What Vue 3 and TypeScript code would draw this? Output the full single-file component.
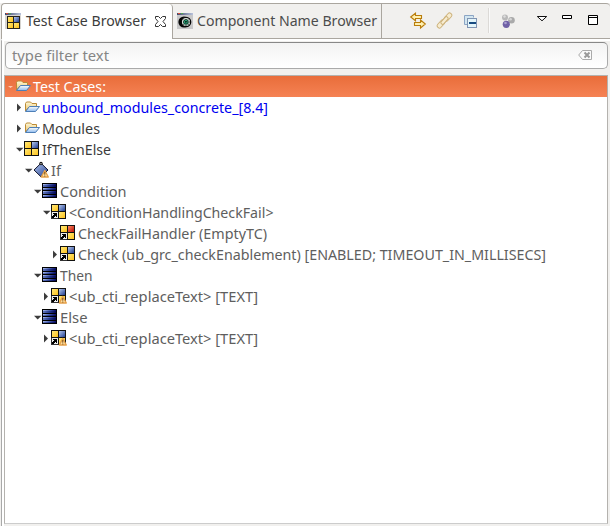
<script setup lang="ts">
interface Row {
  depth: number
  icon: 'folder' | 'test' | 'if' | 'list' | 'ref' | 'fail' | 'warn'
  label: string
  width: number
  state?: 'open' | 'closed'
  tone?: 'selected' | 'link' | 'dark'
}

const rows: Row[] = [
  { depth: 0, icon: 'folder', label: 'Test Cases:', width: 73, state: 'open', tone: 'selected' },
  { depth: 1, icon: 'folder', label: 'unbound_modules_concrete_[8.4]', width: 226, state: 'closed', tone: 'link' },
  { depth: 1, icon: 'folder', label: 'Modules', width: 58, state: 'closed', tone: 'dark' },
  { depth: 1, icon: 'test', label: 'IfThenElse', width: 69, state: 'open', tone: 'dark' },
  { depth: 2, icon: 'if', label: 'If', width: 10, state: 'open' },
  { depth: 3, icon: 'list', label: 'Condition', width: 66.5, state: 'open' },
  { depth: 4, icon: 'ref', label: '<ConditionHandlingCheckFail>', width: 204.5, state: 'open' },
  { depth: 5, icon: 'fail', label: 'CheckFailHandler (EmptyTC)', width: 189 },
  { depth: 5, icon: 'ref', label: 'Check (ub_grc_checkEnablement) [ENABLED; TIMEOUT_IN_MILLISECS]', width: 468, state: 'closed' },
  { depth: 3, icon: 'list', label: 'Then', width: 32.5, state: 'open' },
  { depth: 4, icon: 'warn', label: '<ub_cti_replaceText> [TEXT]', width: 189, state: 'closed' },
  { depth: 3, icon: 'list', label: 'Else', width: 27.5, state: 'open' },
  { depth: 4, icon: 'warn', label: '<ub_cti_replaceText> [TEXT]', width: 189, state: 'closed' },
]
</script>

<template>
  <svg class="defs" width="0" height="0" aria-hidden="true">
    <defs>
      <linearGradient id="yellow" x1="0" y1="0" x2="1" y2="1"><stop stop-color="#ffe878" /><stop offset="1" stop-color="#ffc21c" /></linearGradient>
      <linearGradient id="blue" x1="0" y1="0" x2="1" y2="1"><stop stop-color="#b4c8ee" /><stop offset="1" stop-color="#233f91" /></linearGradient>
      <linearGradient id="red" x1="0" y1="0" x2="1" y2="1"><stop stop-color="#ff8a60" /><stop offset="1" stop-color="#b80d08" /></linearGradient>
      <linearGradient id="bar" x1="0" x2="1"><stop stop-color="#a9bbea" /><stop offset=".5" stop-color="#4a60b0" /><stop offset="1" stop-color="#060a66" /></linearGradient>
      <linearGradient id="bardark" x1="0" x2="1"><stop stop-color="#6176bd" /><stop offset=".5" stop-color="#24388c" /><stop offset="1" stop-color="#02044f" /></linearGradient>
      <linearGradient id="flap" x1="0" y1="0" x2="0" y2="1"><stop stop-color="#fffefa" /><stop offset="1" stop-color="#8dbaf0" /></linearGradient>
      <linearGradient id="back" x1="0" y1="0" x2="0" y2="1"><stop stop-color="#fffbdc" /><stop offset="1" stop-color="#e8bd63" /></linearGradient>
      <linearGradient id="titlebar" x1="0" x2="1"><stop stop-color="#3f4a6c" /><stop offset="1" stop-color="#b9c3dc" /></linearGradient>
    </defs>
  </svg>
  <div class="view">
    <header class="tabs">
      <div class="tab active">
        <svg class="icon" width="16" height="16" shape-rendering="crispEdges">
          <rect width="16" height="16" fill="#d6d4d0" /><rect width="16" height="2" fill="url(#titlebar)" />
          <rect x="1" width="2" height="1" fill="#e14d35" /><rect x="4" width="2" height="1" fill="#4fa74e" />
          <rect x="2" y="3" width="13" height="13" fill="#26231c" />
          <rect x="3" y="4" width="5" height="5" fill="url(#yellow)" /><rect x="9" y="4" width="5" height="5" fill="url(#blue)" />
          <rect x="3" y="10" width="5" height="5" fill="url(#yellow)" /><rect x="9" y="10" width="5" height="5" fill="url(#yellow)" />
        </svg>
        <svg class="tabtext" width="121" height="24"><text x="0" y="17" textLength="120" lengthAdjust="spacingAndGlyphs">Test Case Browser</text></svg>
        <svg class="close" width="11" height="11"><path d="M.5.5h3l2 2 2-2h3v2l-2.500 3 2.500 3v2h-3l-2-2-2 2h-3v-2l2.500-3-2.500-3z" fill="#fff" stroke="#333" /></svg>
      </div>
      <div class="tab inactive">
        <svg class="icon" width="16" height="16">
          <rect width="16" height="16" fill="#c8c8c9" /><rect width="16" height="2" fill="url(#titlebar)" />
          <rect x="1" width="2" height="1" fill="#e14d35" /><rect x="4" width="2" height="1" fill="#4fa74e" />
          <circle cx="7" cy="9" r="5.600" fill="#050505" /><circle cx="9" cy="9" r="4.700" fill="#d9e5df" stroke="#050505" stroke-width="1.300" />
          <circle cx="9" cy="9" r="2.600" fill="#20a778" stroke="#222" stroke-width=".5" /><path d="M9 4v10M4 9h10M5.500 5.500l7 7M12.500 5.500l-7 7" stroke="#111" stroke-width=".8" stroke-dasharray="1 1" />
        </svg>
        <svg class="tabtext" width="182" height="24"><text x="0" y="17" textLength="180" lengthAdjust="spacingAndGlyphs">Component Name Browser</text></svg>
      </div>
      <div class="tools">
        <svg width="190" height="26" viewBox="410 8 190 26">
          <g fill="#fff0b0" stroke="#b97d0c" stroke-width="1.100">
            <path d="M410.700 17l4.800-3.800v2.300h6v3h-6v2.300z" /><path d="M425.300 24l-4.800-4v2.500h-6v3h6V28z" />
          </g>
          <g fill="#f7ecd0" stroke="#ccb17a">
            <rect x="-4.500" y="-2.200" width="9" height="4.400" rx="1.800" transform="translate(441 24)rotate(-48)" />
            <rect x="-4.500" y="-2.200" width="9" height="4.400" rx="1.800" transform="translate(448 17)rotate(-48)" /><rect x="-4.500" y="-1.700" width="9" height="3.400" rx="1.500" transform="translate(444.500 20.500)rotate(-48)" />
          </g>
          <path d="M464.500 24.500v-9h9v2" fill="none" stroke="#8ba5c4" /><path d="M465 16h8v2h-6v6h-2z" fill="#d3e6f0" />
          <path d="M464.500 24.500h2.500" stroke="#8ba5c4" /><rect x="467.500" y="18.500" width="9" height="9" fill="#e3f5fa" stroke="#8094b2" /><path d="M469 22h7v2h-7z" fill="#174b80" />
          <path d="M488.500 8v25" stroke="#dcdad7" /><path d="M489.500 8v25" stroke="#fafafa" />
          <circle cx="505" cy="17.500" r="3" fill="#b9b9b9" /><circle cx="511.500" cy="20.300" r="3.300" fill="#aaa" /><circle cx="506.300" cy="24.300" r="3.600" fill="#7061a6" />
          <circle cx="504.500" cy="16.500" r="1.200" fill="#dedede" /><circle cx="510.600" cy="19.200" r="1.300" fill="#d6d6d6" /><circle cx="505.500" cy="23" r="1.300" fill="#aaa0d2" />
          <path d="M537.300 16.500h9.400l-4.700 4.300z" fill="#fff" stroke="#111" />
          <path d="M562.500 15.500h9v3h-9z" fill="#fff" stroke="#000" />
          <path d="M588.500 15.500h9v9h-9z" fill="#fff" stroke="#000" /><path d="M588 17.500h10" stroke="#000" />
        </svg>
      </div>
    </header>
    <main class="body">
      <div class="filter">
        <svg width="100" height="24"><text x="0" y="17" textLength="97" lengthAdjust="spacingAndGlyphs">type filter text</text></svg>
        <svg width="15" height="11"><path d="M4.500.5h9v9h-9L.7 5z" fill="#fafafa" stroke="#aaa" /><path d="M6.500 2.500l5 5m0-5l-5 5" stroke="#999" stroke-width="2" /></svg>
      </div>
      <div class="tree">
        <div v-for="(row, i) in rows" :key="i" class="row" :class="[row.tone, 'd' + row.depth]">
          <svg class="arrow" width="9" height="17">
            <path v-if="row.tone === 'selected'" d="M2 8h5L4.500 10z" fill="#ffc7ac" />
            <path v-else-if="row.state === 'open'" d="M1 6.800h7.500L4.700 10.500z" fill="#3c3c3c" />
            <path v-else-if="row.state === 'closed'" d="M2 4.500v8l4-4z" fill="#3c3c3c" />
          </svg>
          <svg class="glyph" width="17" height="17">
            <g v-if="row.icon === 'folder'" stroke-linejoin="round">
              <path d="M1.500 12V4.500l1-1.500h4L8 4.500h4.500V8H5z" fill="url(#back)" stroke="#bc8b35" />
              <path d="M1.500 12.500l4-5h10l-4 5z" fill="url(#flap)" stroke="#4d7fb7" />
            </g>
            <g v-else-if="row.icon === 'if'">
              <path d="M8 1.200l7 6.800-7 6.800L1 8z" fill="url(#blue)" stroke="#11142b" /><circle cx="8" cy="1.500" r="1.700" fill="#111" /><circle cx="8" cy="1.700" r=".6" fill="#fff" />
            </g>
            <g v-else-if="row.icon === 'list'" shape-rendering="crispEdges">
              <rect width="15" height="15" fill="#000" />
              <g v-for="(y, n) in [1, 5, 8, 12]" :key="n">
                <rect x="1" :y="y" width="13" height="1" fill="url(#bar)" /><rect x="1" :y="y + 1" width="13" :height="n % 2 ? 1 : 2" fill="url(#bardark)" />
              </g>
            </g>
            <g v-else shape-rendering="crispEdges">
              <rect width="15" height="15" fill="#111" /><rect x="1" y="1" width="6" height="6" fill="url(#yellow)" />
              <rect x="8" y="1" width="6" height="6" :fill="row.icon === 'fail' ? 'url(#red)' : 'url(#blue)'" />
              <rect x="1" y="8" width="6" height="6" fill="url(#yellow)" /><rect x="8" y="8" width="6" height="6" fill="url(#yellow)" />
              <g v-if="row.icon !== 'test'"><rect y="8" width="7" height="7" fill="#eee" /><path d="M2 9h4v4H5v-1H4v1H3v1H1v-2h1v-1h1v-1H2z" fill="#000" /><path d="M0 8h1v7H0zM0 14h7v1H0z" fill="#333" /></g>
            </g>
            <g v-if="row.icon === 'if' || row.icon === 'warn'"><path d="M11.800 8.500l3.500 6.500H8.300z" fill="#ffe0a0" stroke="#e5a04a" stroke-width="1.400" stroke-linejoin="round" /><path d="M11.800 10v2.700m0 .8v1" stroke="#71430e" /></g>
          </svg>
          <svg class="label" :width="row.width + 2" height="21"><text x="0" y="16" :textLength="row.width" lengthAdjust="spacingAndGlyphs">{{ row.label }}</text></svg>
        </div>
      </div>
    </main>
  </div>
</template>

<style>
body { background: #fff; overflow: hidden; }
</style>
<style scoped>
.defs { position: absolute; }
svg { display: block; flex: none; overflow: visible; }
text { font-family: "Noto Sans", "Open Sans", sans-serif; font-size: 14.6px; fill: currentColor; }
.view { box-sizing: border-box; width: 610px; height: 526px; padding: 3px 0 0 1px; background: linear-gradient(#fff 3px, #f1f0ee 3px); }
.tabs { box-sizing: border-box; height: 36px; display: flex; border-top: 1px solid #aaa69f; border-left: 1px solid #aaa69f; border-radius: 4px 4px 0 0; }
.tab { box-sizing: border-box; height: 35px; display: flex; align-items: center; padding-bottom: 1px; color: #3c3c3c; border-right: 1px solid #aaa69f; }
.active { width: 171px; padding-left: 3px; background: #fff; border-radius: 4px 4px 0 0; }
.inactive { width: 209px; padding-left: 4px; color: #4c4c4c; border-bottom: 1px solid #aaa69f; }
.tabtext { margin-left: 5px; }
.inactive .tabtext { margin-left: 4px; }
.close { margin-left: 8px; }
.tools { box-sizing: border-box; flex: 1; height: 35px; padding: 4px 0 0 28px; border-bottom: 1px solid #aaa69f; }
.body { box-sizing: border-box; height: 487px; border-left: 1px solid #a9a9a9; border-top: 2px solid #fff; padding: 1px 2px 0; background: linear-gradient(90deg, #fff 2px, #f1f0ee 2px); }
.filter { box-sizing: border-box; width: 603px; height: 27px; margin-left: 1px; display: flex; align-items: center; justify-content: space-between; padding: 0 14px 0 6px; color: #858585; border: 1px solid #aaa; border-top-color: #888; border-radius: 5px; background: linear-gradient(#f3f3f3, #fff); }
.tree { box-sizing: border-box; width: 604px; height: 449px; margin-top: 6px; border: 1px solid #b4b2ae; border-bottom-color: #ccc; background: #fff; }
.row { display: flex; height: 21px; align-items: center; color: #5e5e5e; }
.arrow { margin-left: 1px; }
.glyph { margin: 0 1px 0 0; }
.d1 { padding-left: 9px; }
.d2 { padding-left: 18px; }
.d3 { padding-left: 27px; }
.d4 { padding-left: 36px; }
.d5 { padding-left: 45px; }
.dark { color: #3c3c3c; }
.link { color: #0000f0; }
.selected { color: #fff; background: linear-gradient(#e96d3a, #f58254); }
</style>
